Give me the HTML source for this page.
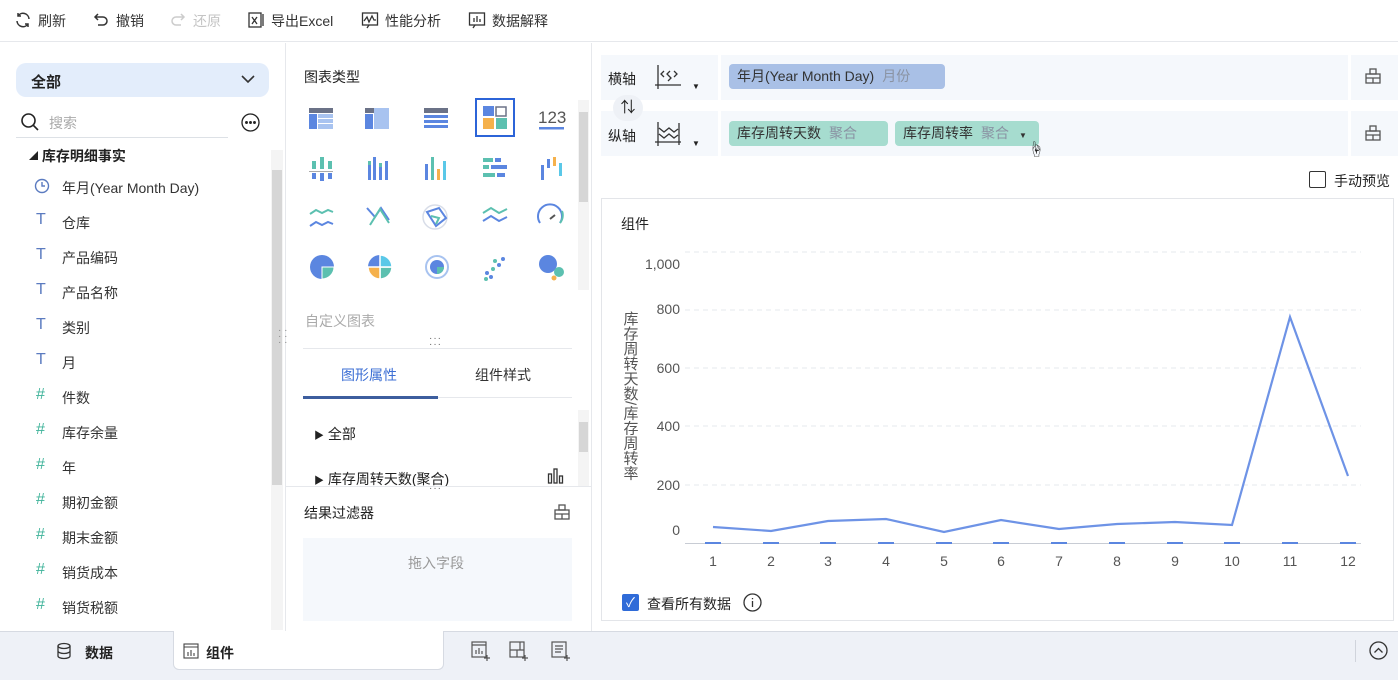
<!DOCTYPE html>
<html><head><meta charset="utf-8"><style>
*{box-sizing:border-box;margin:0;padding:0}
body{width:1398px;height:680px;overflow:hidden;background:#fff;font-family:"Liberation Sans","Noto Sans CJK SC",sans-serif;font-size:14px;color:#222;position:relative}
.a{position:absolute;white-space:nowrap}
.tb{top:0;left:0;width:1398px;height:42px;border-bottom:1px solid #e6e8ec}
.tb span{position:absolute;top:11px;font-size:14px;color:#333}
.fld{left:36px;font-size:14px;color:#333}
.ic{left:36px;font-size:16px}
.pill{position:absolute;height:25px;border-radius:4px;font-size:14px;line-height:25px;padding-left:8px;color:#333;white-space:nowrap}
.pill i{font-style:normal;color:#8a93a3;margin-left:8px}
</style></head><body>
<div class="a tb">
<svg class="a" style="left:14px;top:11px" width="18" height="18" viewBox="0 0 18 18" fill="none" stroke="#333" stroke-width="1.5"><path d="M15 8a6 6 0 0 0-11-3M3 10a6 6 0 0 0 11 3"/><path d="M4 2v3h3M14 16v-3h-3"/></svg>
<span style="left:38px">刷新</span>
<svg class="a" style="left:92px;top:11px" width="18" height="18" viewBox="0 0 18 18" fill="none" stroke="#333" stroke-width="1.5"><path d="M4 6h7a4 4 0 0 1 0 8H6M6 3L3 6l3 3"/></svg>
<span style="left:116px">撤销</span>
<svg class="a" style="left:169px;top:11px" width="18" height="18" viewBox="0 0 18 18" fill="none" stroke="#ccc" stroke-width="1.5"><path d="M14 6H7a4 4 0 0 0 0 8h5M12 3l3 3-3 3"/></svg>
<span style="left:193px;color:#c4c4c4">还原</span>
<svg class="a" style="left:247px;top:11px" width="18" height="18" viewBox="0 0 18 18" fill="none" stroke="#333" stroke-width="1.3"><rect x="2" y="2" width="12" height="14"/><path d="M5 6l5 7M10 6l-5 7M16 3v12"/></svg>
<span style="left:271px">导出Excel</span>
<svg class="a" style="left:361px;top:11px" width="18" height="18" viewBox="0 0 18 18" fill="none" stroke="#333" stroke-width="1.3"><rect x="1.5" y="2" width="15" height="12"/><path d="M3 10l3-4 2 5 3-6 2 4h2M8 14l-2 3"/></svg>
<span style="left:385px">性能分析</span>
<svg class="a" style="left:468px;top:11px" width="18" height="18" viewBox="0 0 18 18" fill="none" stroke="#333" stroke-width="1.3"><rect x="1.5" y="2" width="15" height="12"/><path d="M6 11V7M9 11V5M12 11V8M7 14l-2 3"/></svg>
<span style="left:492px">数据解释</span>
</div>
<div class="a" style="left:285px;top:43px;width:1px;height:588px;background:#e6e8ec"></div>
<div class="a" style="left:16px;top:63px;width:253px;height:34px;background:#e3edfb;border-radius:10px"></div>
<div class="a" style="left:31px;top:71px;font-size:15px;font-weight:bold">全部</div>
<svg class="a" style="left:240px;top:73px" width="16" height="12" viewBox="0 0 16 12" fill="none" stroke="#333" stroke-width="1.6"><path d="M2 3l6 6 6-6"/></svg>
<svg class="a" style="left:20px;top:112px" width="20" height="20" viewBox="0 0 20 20" fill="none" stroke="#222" stroke-width="1.6"><circle cx="8.5" cy="8.5" r="6.5"/><path d="M13.5 13.5L18 18"/></svg>
<div class="a" style="left:49px;top:113px;color:#aaa">搜索</div>
<div class="a" style="left:16px;top:137px;width:212px;height:1px;background:#dde1e6"></div>
<svg class="a" style="left:241px;top:113px" width="19" height="19" viewBox="0 0 19 19" fill="none" stroke="#222" stroke-width="1.3"><circle cx="9.5" cy="9.5" r="8.5"/><circle cx="5.5" cy="9.5" r=".8" fill="#222"/><circle cx="9.5" cy="9.5" r=".8" fill="#222"/><circle cx="13.5" cy="9.5" r=".8" fill="#222"/></svg>
<div class="a" style="left:29px;top:146px;font-size:14px;font-weight:bold"><span style="font-size:9px;vertical-align:2px">◢</span> 库存明细事实</div>
<div class="a" style="left:271px;top:150px;width:12px;height:480px;background:#f4f4f4"></div>
<div class="a" style="left:272px;top:170px;width:10px;height:315px;background:#d6d6d6"></div>
<div class="a" style="left:278px;top:328px;color:#888;font-size:10px;line-height:6px">· ·<br>· ·<br>· ·</div>
<svg class="a" style="left:34px;top:178px" width="16" height="16" viewBox="0 0 16 16" fill="none" stroke="#5b7bc0" stroke-width="1.4"><circle cx="8" cy="8" r="6.5"/><path d="M8 4v4h3"/></svg>
<div class="a fld" style="left:62px;top:178px">年月(Year Month Day)</div>
<div class="a ic" style="top:211px;color:#5b7bc0">T</div><div class="a fld" style="left:62px;top:213px">仓库</div>
<div class="a ic" style="top:246px;color:#5b7bc0">T</div><div class="a fld" style="left:62px;top:248px">产品编码</div>
<div class="a ic" style="top:281px;color:#5b7bc0">T</div><div class="a fld" style="left:62px;top:283px">产品名称</div>
<div class="a ic" style="top:316px;color:#5b7bc0">T</div><div class="a fld" style="left:62px;top:318px">类别</div>
<div class="a ic" style="top:351px;color:#5b7bc0">T</div><div class="a fld" style="left:62px;top:353px">月</div>
<div class="a ic" style="top:386px;color:#3fb39a">#</div><div class="a fld" style="left:62px;top:388px">件数</div>
<div class="a ic" style="top:421px;color:#3fb39a">#</div><div class="a fld" style="left:62px;top:423px">库存余量</div>
<div class="a ic" style="top:456px;color:#3fb39a">#</div><div class="a fld" style="left:62px;top:458px">年</div>
<div class="a ic" style="top:491px;color:#3fb39a">#</div><div class="a fld" style="left:62px;top:493px">期初金额</div>
<div class="a ic" style="top:526px;color:#3fb39a">#</div><div class="a fld" style="left:62px;top:528px">期末金额</div>
<div class="a ic" style="top:561px;color:#3fb39a">#</div><div class="a fld" style="left:62px;top:563px">销货成本</div>
<div class="a ic" style="top:596px;color:#3fb39a">#</div><div class="a fld" style="left:62px;top:598px">销货税额</div>
<div class="a" style="left:591px;top:43px;width:1px;height:588px;background:#e6e8ec"></div>
<div class="a" style="left:304px;top:67px;font-size:14px">图表类型</div>
<div class="a" style="left:578px;top:100px;width:11px;height:190px;background:#f4f4f4"></div>
<div class="a" style="left:579px;top:112px;width:9px;height:90px;background:#d6d6d6"></div>
<svg class="a" style="left:300px;top:95px" width="275" height="195" viewBox="0 0 275 195">
<g>
<rect x="9" y="13" width="24" height="5" fill="#6b7287"/><rect x="9" y="19" width="8" height="15" fill="#5b86e0"/><rect x="18" y="19" width="15" height="4" fill="#a8c3f0"/><rect x="18" y="24" width="15" height="4" fill="#a8c3f0"/><rect x="18" y="29" width="15" height="5" fill="#a8c3f0"/>
<rect x="65" y="13" width="24" height="5" fill="#6b7287"/><rect x="65" y="19" width="8" height="15" fill="#5b86e0"/><rect x="74" y="13" width="15" height="21" fill="#a8c3f0"/>
<rect x="124" y="13" width="24" height="5" fill="#6b7287"/><rect x="124" y="20" width="24" height="3" fill="#5b86e0"/><rect x="124" y="25" width="24" height="3" fill="#5b86e0"/><rect x="124" y="30" width="24" height="3" fill="#5b86e0"/>
<rect x="176" y="4" width="38" height="37" fill="none" stroke="#2c64d8" stroke-width="2"/>
<rect x="183" y="11" width="11" height="10" fill="#5b86e0"/><rect x="196" y="12" width="10" height="9" fill="none" stroke="#6b7287" stroke-width="1.5"/><rect x="183" y="23" width="11" height="11" fill="#f5b14c"/><rect x="196" y="23" width="11" height="11" fill="#5cc0b0"/>
<text x="238" y="28" font-family="Liberation Sans" font-size="17" fill="#555">123</text><rect x="239" y="32" width="25" height="2.5" fill="#5b86e0"/>
</g>
<g>
<rect x="12" y="66" width="4" height="8" fill="#5cc0b0"/><rect x="20" y="62" width="4" height="12" fill="#5cc0b0"/><rect x="28" y="66" width="4" height="8" fill="#5cc0b0"/><rect x="9" y="76" width="24" height="1" fill="#aaa"/><rect x="12" y="78" width="4" height="6" fill="#5b86e0"/><rect x="20" y="78" width="4" height="8" fill="#5b86e0"/><rect x="28" y="78" width="4" height="6" fill="#5b86e0"/>
<rect x="68" y="70" width="3" height="15" fill="#5b86e0"/><rect x="73" y="62" width="3" height="23" fill="#5b86e0"/><rect x="79" y="72" width="3" height="13" fill="#5b86e0"/><rect x="85" y="66" width="3" height="19" fill="#5b86e0"/><rect x="68" y="66" width="3" height="4" fill="#5cc0b0"/><rect x="79" y="68" width="3" height="4" fill="#5cc0b0"/>
<rect x="125" y="69" width="3" height="16" fill="#5b86e0"/><rect x="131" y="62" width="3" height="23" fill="#5cc0b0"/><rect x="137" y="74" width="3" height="11" fill="#f5b14c"/><rect x="143" y="66" width="3" height="19" fill="#5ac8e8"/>
<rect x="183" y="63" width="10" height="4" fill="#5cc0b0"/><rect x="195" y="63" width="6" height="4" fill="#5b86e0"/><rect x="183" y="70" width="6" height="4" fill="#5cc0b0"/><rect x="191" y="70" width="16" height="4" fill="#5b86e0"/><rect x="183" y="78" width="12" height="4" fill="#5cc0b0"/><rect x="197" y="78" width="8" height="4" fill="#5b86e0"/>
<rect x="241" y="70" width="3" height="15" fill="#5b86e0"/><rect x="247" y="64" width="3" height="9" fill="#5b86e0"/><rect x="253" y="62" width="3" height="9" fill="#f5b14c"/><rect x="259" y="68" width="3" height="13" fill="#5ac8e8"/>
</g>
<g fill="none" stroke-width="2">
<path d="M10 119l6-4 6 3 6-3 5 2" stroke="#5cc0b0"/><path d="M10 131l6-4 6 3 6-3 5 2" stroke="#5b86e0"/>
<path d="M67 113l8 9 6-9 8 12" stroke="#5b86e0"/><path d="M70 130l10-16 9 14" stroke="#5cc0b0"/>
<circle cx="135" cy="122" r="12" stroke="#d8dde8" stroke-width="1.5"/><path d="M127 117l12-4 7 10-10 8z" stroke="#5b86e0"/><path d="M131 121l8 2-3 6" stroke="#5cc0b0"/>
<path d="M183 118l8-5 8 5 8-4" stroke="#5cc0b0"/><path d="M183 126l8-5 8 5 8-4" stroke="#5b86e0"/>
<path d="M240 128a12 12 0 1 1 20 0" stroke="#5b86e0"/><path d="M260 128a12 12 0 0 0 2-12" stroke="#5cc0b0"/><path d="M250 124l5-4" stroke="#555"/>
</g>
<g>
<circle cx="22" cy="172" r="12" fill="#5b86e0"/><path d="M22 172h12a12 12 0 0 1-12 12z" fill="#5cc0b0" stroke="#fff"/>
<circle cx="80" cy="172" r="12" fill="#5b86e0"/><path d="M80 172h12a12 12 0 0 1-12 12z" fill="#5cc0b0" stroke="#fff" stroke-width="1.5"/><path d="M80 172v12a12 12 0 0 1-12-12z" fill="#f5b14c" stroke="#fff" stroke-width="1.5"/><path d="M80 172V160a12 12 0 0 1 12 12z" fill="#5ac8e8" stroke="#fff" stroke-width="1.5"/>
<circle cx="137" cy="172" r="11" fill="none" stroke="#a8c3f0" stroke-width="2"/><circle cx="137" cy="172" r="7" fill="#5b86e0"/><path d="M137 172h7a7 7 0 0 1-7 7z" fill="#5cc0b0"/>
<circle cx="187" cy="178" r="2" fill="#5b86e0"/><circle cx="193" cy="174" r="2" fill="#5cc0b0"/><circle cx="199" cy="170" r="2" fill="#5b86e0"/><circle cx="195" cy="166" r="2" fill="#5cc0b0"/><circle cx="203" cy="164" r="2" fill="#5b86e0"/><circle cx="186" cy="184" r="2" fill="#5cc0b0"/><circle cx="191" cy="182" r="2" fill="#5b86e0"/>
<circle cx="248" cy="169" r="9" fill="#5b86e0"/><circle cx="259" cy="177" r="5" fill="#5cc0b0"/><circle cx="254" cy="183" r="2.5" fill="#f5b14c"/>
</g>
</svg>
<div class="a" style="left:305px;top:311px;color:#aaa">自定义图表</div>
<div class="a" style="left:429px;top:336px;color:#666;font-size:10px;letter-spacing:1px;line-height:6px">···<br>···</div>
<div class="a" style="left:303px;top:348px;width:269px;height:1px;background:#e6e8ec"></div>
<div class="a" style="left:341px;top:365px;color:#3d6fd4">图形属性</div>
<div class="a" style="left:475px;top:365px;color:#333">组件样式</div>
<div class="a" style="left:303px;top:397px;width:269px;height:1px;background:#e6e8ec"></div>
<div class="a" style="left:303px;top:396px;width:135px;height:3px;background:#3d5e9e"></div>
<div class="a" style="left:578px;top:410px;width:11px;height:76px;background:#f4f4f4"></div>
<div class="a" style="left:579px;top:422px;width:9px;height:30px;background:#d6d6d6"></div>
<div class="a" style="left:314px;top:424px"><span style="font-size:10px">▶</span> 全部</div>
<div class="a" style="left:314px;top:469px"><span style="font-size:10px">▶</span> 库存周转天数(聚合)</div>
<svg class="a" style="left:547px;top:467px" width="18" height="18" viewBox="0 0 18 18" fill="none" stroke="#333" stroke-width="1.3"><rect x="1.5" y="7" width="3" height="9"/><rect x="7" y="2" width="3" height="14"/><rect x="12.5" y="9" width="3" height="7"/></svg>
<div class="a" style="left:286px;top:486px;width:305px;height:1px;background:#e6e8ec"></div>
<div class="a" style="left:429px;top:486px;color:#666;font-size:10px;letter-spacing:1px;line-height:6px">···</div>
<div class="a" style="left:304px;top:503px">结果过滤器</div>
<svg class="a" style="left:553px;top:503px" width="18" height="18" viewBox="0 0 18 18" fill="none" stroke="#555" stroke-width="1.3"><rect x="2" y="7" width="14" height="9"/><rect x="6" y="2" width="6" height="5"/><path d="M2 11h14M9 11v5"/></svg>
<div class="a" style="left:303px;top:538px;width:269px;height:83px;background:#f5f8fc"></div>
<div class="a" style="left:408px;top:553px;color:#999">拖入字段</div>
<div class="a" style="left:601px;top:55px;width:117px;height:45px;background:#f5f8fc"></div>
<div class="a" style="left:721px;top:55px;width:627px;height:45px;background:#f5f8fc"></div>
<div class="a" style="left:1351px;top:55px;width:47px;height:45px;background:#f5f8fc"></div>
<div class="a" style="left:601px;top:111px;width:117px;height:45px;background:#f5f8fc"></div>
<div class="a" style="left:721px;top:111px;width:627px;height:45px;background:#f5f8fc"></div>
<div class="a" style="left:1351px;top:111px;width:47px;height:45px;background:#f5f8fc"></div>
<div class="a" style="left:608px;top:69px">横轴</div>
<div class="a" style="left:608px;top:126px">纵轴</div>
<div class="a" style="left:613px;top:95px;width:30px;height:26px;border-radius:13px;background:#eef1f6;text-align:center;font-size:15px;line-height:26px">⇅</div>
<svg class="a" style="left:654px;top:63px" width="28" height="28" viewBox="0 0 28 28" fill="none" stroke="#333" stroke-width="1.3"><path d="M4 2v24M1 22h26M10 8l-3 3 3 3M16 8l-3 3 3 3M14 12l3 3-3 3M20 8l3 3-3 3"/></svg>
<svg class="a" style="left:654px;top:120px" width="28" height="28" viewBox="0 0 28 28" fill="none" stroke="#333" stroke-width="1.3"><path d="M4 2v24M1 22h26M25 3v22M5 8l5 4 5-4 5 4 4-3M5 14l5 4 5-4 5 4 4-3"/></svg>
<div class="a" style="left:692px;top:82px;font-size:8px">▼</div>
<div class="a" style="left:692px;top:139px;font-size:8px">▼</div>
<div class="pill" style="left:729px;top:64px;width:216px;background:#a9c0e6">年月(Year Month Day)<i>月份</i></div>
<div class="pill" style="left:729px;top:121px;width:159px;background:#a6dccf">库存周转天数<i>聚合</i></div>
<div class="pill" style="left:895px;top:121px;width:144px;background:#a6dccf">库存周转率<i>聚合</i><span style="font-size:8px;margin-left:10px">▼</span></div>
<div class="a" style="left:1028px;top:136px;font-size:16px">☝</div>
<svg class="a" style="left:1364px;top:67px" width="18" height="18" viewBox="0 0 18 18" fill="none" stroke="#555" stroke-width="1.3"><rect x="2" y="7" width="14" height="9"/><rect x="6" y="2" width="6" height="5"/><path d="M2 11h14M9 11v5"/></svg>
<svg class="a" style="left:1364px;top:124px" width="18" height="18" viewBox="0 0 18 18" fill="none" stroke="#555" stroke-width="1.3"><rect x="2" y="7" width="14" height="9"/><rect x="6" y="2" width="6" height="5"/><path d="M2 11h14M9 11v5"/></svg>
<div class="a" style="left:1309px;top:171px;width:17px;height:17px;border:1.3px solid #333;border-radius:2px"></div>
<div class="a" style="left:1334px;top:171px">手动预览</div>
<div class="a" style="left:601px;top:198px;width:793px;height:423px;border:1px solid #e3e5e9"></div>
<div class="a" style="left:621px;top:214px">组件</div>
<svg class="a" style="left:601px;top:198px" width="793" height="423">
<g stroke="#e6e8ec" stroke-dasharray="5 4"><path d="M84 54H760M84 112H760M84 170H760M84 228H760M84 287H760"/></g>
<path d="M84 345.5H760" stroke="#c8ccd4"/>
<g font-family="Liberation Sans" font-size="14" fill="#555" text-anchor="end"><text x="79" y="71">1,000</text><text x="79" y="116">800</text><text x="79" y="175">600</text><text x="79" y="233">400</text><text x="79" y="292">200</text><text x="79" y="337">0</text></g>
<g font-family="Liberation Sans" font-size="14" fill="#555" text-anchor="middle"><text x="112" y="368">1</text><text x="170" y="368">2</text><text x="227" y="368">3</text><text x="285" y="368">4</text><text x="343" y="368">5</text><text x="400" y="368">6</text><text x="458" y="368">7</text><text x="516" y="368">8</text><text x="574" y="368">9</text><text x="631" y="368">10</text><text x="689" y="368">11</text><text x="747" y="368">12</text></g>
<g stroke="#5b86e0" stroke-width="2"><path d="M104 345h16M162 345h16M219 345h16M277 345h16M335 345h16M392 345h16M450 345h16M508 345h16M566 345h16M623 345h16M681 345h16M739 345h16"/></g>
<polyline fill="none" stroke="#6e93e6" stroke-width="2.2" points="112,329 170,333 227,323 285,321 343,334 400,322 458,331 516,326 574,324 631,327 689,119 747,278"/>
<text font-family="Liberation Sans,Noto Sans CJK SC,sans-serif" font-size="15" fill="#555" writing-mode="tb" x="29" y="113">库存周转天数/库存周转率</text>
</svg>
<div class="a" style="left:622px;top:594px;width:17px;height:17px;background:#2f6bd8;border-radius:2px;color:#fff;font-size:13px;line-height:17px;text-align:center">✓</div>
<div class="a" style="left:647px;top:594px">查看所有数据</div>
<svg class="a" style="left:743px;top:593px" width="19" height="19" viewBox="0 0 19 19" fill="none" stroke="#333" stroke-width="1.3"><circle cx="9.5" cy="9.5" r="8.5"/><path d="M9.5 8v6M9.5 5v1.2"/></svg>
<div class="a" style="left:0;top:631px;width:1398px;height:49px;background:#eef1f7;border-top:1px solid #d6dae2"></div>
<div class="a" style="left:173px;top:631px;width:271px;height:39px;background:#fff;border:1px solid #d6dae2;border-top:none;border-radius:0 0 6px 6px"></div>
<svg class="a" style="left:56px;top:642px" width="16" height="18" viewBox="0 0 16 18" fill="none" stroke="#333" stroke-width="1.3"><ellipse cx="8" cy="4" rx="6" ry="2.5"/><path d="M2 4v10c0 1.4 2.7 2.5 6 2.5s6-1.1 6-2.5V4M2 9c0 1.4 2.7 2.5 6 2.5S14 10.4 14 9"/></svg>
<div class="a" style="left:85px;top:643px;font-weight:bold">数据</div>
<svg class="a" style="left:183px;top:643px" width="16" height="16" viewBox="0 0 16 16" fill="none" stroke="#444" stroke-width="1.1"><rect x="1" y="1" width="14" height="14"/><path d="M1 4h14M5 13V9M8 13V7M11 13V10"/></svg>
<div class="a" style="left:206px;top:643px;font-weight:bold">组件</div>
<svg class="a" style="left:471px;top:641px" width="20" height="20" viewBox="0 0 20 20" fill="none" stroke="#555" stroke-width="1.2"><rect x="1" y="1" width="14" height="15"/><path d="M1 4h14M5 13V9M8 13V7M11 13V10M16 14v6M13 17h6" /></svg>
<svg class="a" style="left:509px;top:641px" width="20" height="20" viewBox="0 0 20 20" fill="none" stroke="#555" stroke-width="1.2"><rect x="1" y="1" width="14" height="15"/><path d="M1 9h14M8 9v7M11 1v8M16 14v6M13 17h6"/></svg>
<svg class="a" style="left:551px;top:641px" width="20" height="20" viewBox="0 0 20 20" fill="none" stroke="#555" stroke-width="1.2"><rect x="1" y="1" width="14" height="15"/><path d="M4 5h8M4 8h8M4 11h6M16 14v6M13 17h6"/></svg>
<div class="a" style="left:1355px;top:640px;width:1px;height:22px;background:#d0d4dc"></div>
<svg class="a" style="left:1369px;top:641px" width="19" height="19" viewBox="0 0 19 19" fill="none" stroke="#333" stroke-width="1.3"><circle cx="9.5" cy="9.5" r="8.5"/><path d="M5.5 11.5l4-4 4 4"/></svg>
</body></html>
